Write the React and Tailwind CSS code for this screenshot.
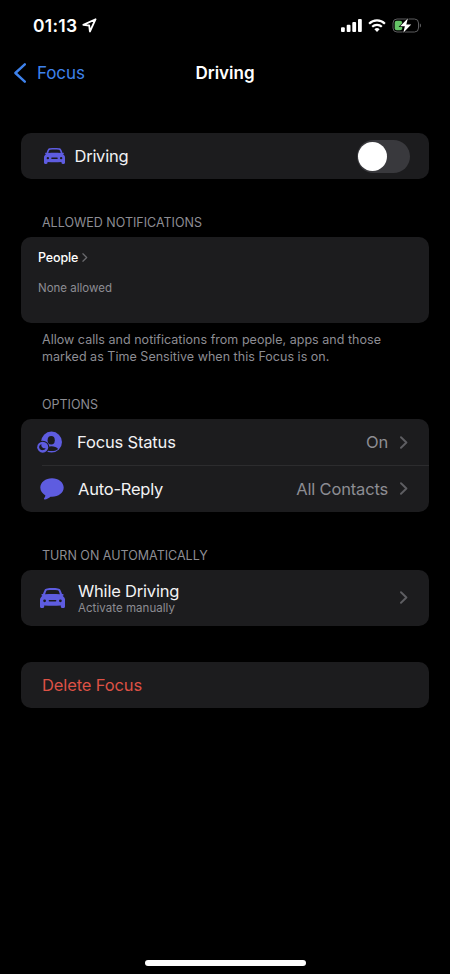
import React, { useState } from 'react';

const ChevronIcon = ({ className }) => (
  <svg viewBox="0 0 8 13" className={className} fill="none" stroke="currentColor" strokeLinecap="round" strokeLinejoin="round">
    <path d="M1 1.2 6.400 6.5 1 11.8" strokeWidth="1.9" />
  </svg>
);

const CarIcon = ({ className }) => (
  <svg viewBox="0 0 25 20" preserveAspectRatio="none" className={className} fill="currentColor" fillRule="evenodd">
    <path d="M7 .4C10.500 0 14.500 0 18 .4c1.200.1 1.900.5 2.400 1.500.700 1.300 1.200 2.700 1.600 4.200.900-.1 1.600.1 1.700.6.100.5-.3.900-1 1L24 9.200c.700.800 1 1.500 1 2.600v6.700c0 .900-.600 1.500-1.500 1.500h-1.200c-.900 0-1.500-.600-1.500-1.500v-.900c-5.500.300-11.100.300-16.600 0v.900c0 .900-.600 1.500-1.500 1.500H1.500C.6 20 0 19.400 0 18.500v-6.700c0-1.100.3-1.800 1-2.600l1.300-1.500c-.7-.1-1.100-.5-1-1 .1-.5.800-.7 1.700-.6.4-1.500.9-2.900 1.600-4.200C5.100.9 5.800.5 7 .4zM7.300 2.200c-.5.1-.8.3-1 .7-.5 1.100-.9 2.200-1.200 3.400 4.900-.3 9.900-.3 14.800 0-.3-1.200-.7-2.300-1.200-3.400-.2-.4-.5-.6-1-.7-3.500-.4-6.900-.4-10.400 0zM4.600 11.400a1.400 1.400 0 1 0 0 2.800 1.400 1.400 0 0 0 0-2.800zM20.400 11.400a1.400 1.400 0 1 0 0 2.800 1.400 1.400 0 0 0 0-2.800zM9.400 12a.8.8 0 0 0 0 1.600h6.200a.8.8 0 0 0 0-1.600z" />
  </svg>
);

const FocusStatusIcon = () => (
  <svg viewBox="0 0 26 22" className="w-[26px] h-[22px]">
    <circle cx="14.500" cy="11.100" r="10.500" fill="#5e5ce0" />
    <ellipse cx="14.200" cy="9.300" rx="3.600" ry="4.300" fill="#1c1c1e" />
    <path d="M8 18.100c1.300-2 3.600-2.900 6.400-2.900s5.500.900 6.700 2.700c-1.700 1.500-4 2.200-6.700 2.200-2.600 0-4.800-.600-6.400-2z" fill="#1c1c1e" />
    <circle cx="5.700" cy="16.200" r="6.500" fill="#1c1c1e" />
    <circle cx="5.700" cy="16.200" r="5.500" fill="#5e5ce0" />
    <path d="M4.500 13c-1.800.7-2.600 2.100-2.300 3.700.5 1.800 2.300 2.900 4.100 2.400 1.200-.3 2-1 2.300-1.900-2.700.5-4.900-1.400-4.100-4.200z" fill="#1c1c1e" />
  </svg>
);

const BubbleIcon = () => (
  <svg viewBox="0 0 24 22" className="w-[24px] h-[22px]" fill="#5e5ce0">
    <path d="M12 .3c6.500 0 11.700 4.100 11.700 9.300s-5.200 9.200-11.700 9.200c-.5 0-1 0-1.500-.1-1.700 1.500-3.700 2.500-5.700 2.800-.8.100-1.100-.6-.7-1.200.7-.9 1.200-1.800 1.300-2.900C2.300 15.800.3 12.900.3 9.600.3 4.400 5.500.3 12 .3z" />
  </svg>
);

const StatusBar = () => (
  <div className="h-[50px] flex items-center justify-between pl-[33px] pr-[29px] pt-[1px] text-white">
    <div className="flex items-center">
      <span className="text-[17.500px] leading-5 font-semibold tracking-[0.250px]">01:13</span>
      <svg viewBox="0 0 15 15" className="w-[15px] h-[15px] ml-[5px]" fill="none" stroke="currentColor" strokeWidth="1.800" strokeLinejoin="round">
        <path d="M13.600 1.200 1.300 6.900 7.200 7.500 7.900 13.500z" />
      </svg>
    </div>
    <div className="flex items-center">
      <svg viewBox="0 0 21 13" className="w-[21px] h-[13px]" fill="currentColor">
        <rect x="0" y="8.200" width="3.800" height="4.800" rx="1" />
        <rect x="5.700" y="5.800" width="3.800" height="7.200" rx="1" />
        <rect x="11.300" y="3" width="3.800" height="10" rx="1" />
        <rect x="17" y="0" width="3.800" height="13" rx="1" />
      </svg>
      <svg viewBox="0 0 18 13" className="w-[18px] h-[13px] ml-[6px]" fill="none" stroke="currentColor" strokeWidth="2.200">
        <path d="M1.100 4.700a11.200 11.200 0 0 1 15.800 0" />
        <path d="M4.200 7.800a6.900 6.900 0 0 1 9.600 0" />
        <path d="M9 13 6.400 10.300a3.800 3.800 0 0 1 5.200 0z" fill="currentColor" stroke="none" />
      </svg>
      <svg viewBox="0 0 29 15" className="w-[29px] h-[15px] ml-[6px]">
        <rect x="1" y="1" width="25.500" height="13" rx="4" fill="none" stroke="#5c5c5e" />
        <path d="M27.800 5.500v4c.9-.4 1.200-1.100 1.200-2s-.3-1.600-1.200-2z" fill="#5c5c5e" />
        <rect x="2.700" y="2.700" width="7.500" height="9.600" rx="2" fill="#65c466" />
        <path d="M15.900.3 8.200 8.300h4.700L11.300 14.700l7.900-8.200h-4.900z" fill="#fff" stroke="#000" strokeWidth="1.400" paintOrder="stroke" />
      </svg>
    </div>
  </div>
);

const SectionTitle = ({ children, className }) => (
  <h2 className={`pl-[21px] text-[12.500px] leading-4 text-[#8d8d93] ${className}`}>{children}</h2>
);

const App = () => {
  const [enabled, setEnabled] = useState(false);

  return (
    <div className="h-[974px] w-[450px] bg-black overflow-hidden flex flex-col font-['Inter',sans-serif] text-[#f2f2f4]">
      <StatusBar />

      {/* Navigation */}
      <header className="h-[46px] grid grid-cols-3 items-center px-[14px]">
        <button className="flex items-center text-[#3e82ec]">
          <svg viewBox="0 0 12 20" className="w-[12px] h-[20px]" fill="none" stroke="currentColor" strokeWidth="2.400" strokeLinecap="round" strokeLinejoin="round">
            <path d="M10.800 1.300 1.400 10l9.400 8.700" />
          </svg>
          <span className="ml-[11px] text-[17px] leading-6 tracking-[-0.100px]">Focus</span>
        </button>
        <h1 className="text-center text-[17px] leading-6 font-semibold text-white">Driving</h1>
      </header>

      <main className="flex-1 px-[21px] pt-[37px]">
        {/* Toggle */}
        <div className="h-[46px] rounded-[10px] bg-[#1c1c1e] flex items-center pl-[22.500px] pr-[19px]">
          <CarIcon className="w-[21px] h-[16px] text-[#5e5ce0]" />
          <span className="ml-[10px] text-[16.500px] leading-6 tracking-[-0.250px]">Driving</span>
          <button
            onClick={() => setEnabled(!enabled)}
            className={`ml-auto w-[53.500px] h-[33px] rounded-full p-[1.500px] flex items-center ${enabled ? 'bg-[#30d158] justify-end' : 'bg-[#39393d]'}`}
          >
            <span className="w-[29px] h-[29px] rounded-full bg-white" />
          </button>
        </div>

        <SectionTitle className="mt-[36px]">ALLOWED NOTIFICATIONS</SectionTitle>
        <div className="mt-[6px] h-[85.500px] rounded-[10px] bg-[#1c1c1e] pl-[17px] pt-[12.500px]">
          <div className="flex items-center">
            <span className="text-[12.500px] leading-4 font-medium tracking-[-0.150px] text-white">People</span>
            <ChevronIcon className="w-[6px] h-[9px] ml-[4px] text-[#6a6a6e]" />
          </div>
          <p className="mt-[14px] text-[11.500px] leading-4 text-[#8d8d93]">None allowed</p>
        </div>
        <p className="mt-[8.500px] pl-[21px] text-[12.500px] leading-[17px] tracking-[0.030px] text-[#8d8d93] whitespace-nowrap">
          Allow calls and notifications from people, apps and those
          <br />
          marked as Time Sensitive when this Focus is on.
        </p>

        {/* Options */}
        <SectionTitle className="mt-[32px]">OPTIONS</SectionTitle>
        <div className="mt-[6px] rounded-[10px] bg-[#1c1c1e]">
          <div className="h-[46px] flex items-center pl-[16px] pr-[21px]">
            <FocusStatusIcon />
            <span className="ml-[14px] text-[16.500px] leading-6 tracking-[-0.170px]">Focus Status</span>
            <span className="ml-auto text-[16.500px] leading-6 tracking-[-0.170px] text-[#8d8d93]">On</span>
            <ChevronIcon className="w-[8px] h-[13px] ml-[12px] text-[#5e5e62]" />
          </div>
          <div className="ml-[21px] h-px bg-[#2c2c2e]" />
          <div className="h-[45.500px] flex items-center pl-[19px] pr-[21px]">
            <BubbleIcon />
            <span className="ml-[14px] text-[16.500px] leading-6 tracking-[-0.220px]">Auto-Reply</span>
            <span className="ml-auto text-[16.500px] leading-6 tracking-[-0.170px] text-[#8d8d93]">All Contacts</span>
            <ChevronIcon className="w-[8px] h-[13px] ml-[12px] text-[#5e5e62]" />
          </div>
        </div>

        {/* Automation */}
        <SectionTitle className="mt-[36.500px]">TURN ON AUTOMATICALLY</SectionTitle>
        <div className="mt-[6px] h-[55.500px] rounded-[10px] bg-[#1c1c1e] flex items-center pl-[19px] pr-[21px]">
          <CarIcon className="w-[25px] h-[20px] text-[#5e5ce0]" />
          <div className="ml-[13px]">
            <div className="text-[16.500px] leading-[20px] tracking-[-0.200px]">While Driving</div>
            <div className="text-[11.500px] leading-[14px] tracking-[0.050px] text-[#8d8d93]">Activate manually</div>
          </div>
          <ChevronIcon className="w-[8px] h-[13px] ml-auto text-[#5e5e62]" />
        </div>

        <button className="mt-[36.500px] w-full h-[46px] rounded-[10px] bg-[#1c1c1e] flex items-center pl-[21px] text-[16.500px] leading-6 tracking-[-0.120px] text-[#dc5145]">
          Delete Focus
        </button>
      </main>

      {/* Home indicator */}
      <div className="mx-auto mb-[8px] w-[161px] h-[6px] rounded-full bg-white" />
    </div>
  );
};

export default App;
